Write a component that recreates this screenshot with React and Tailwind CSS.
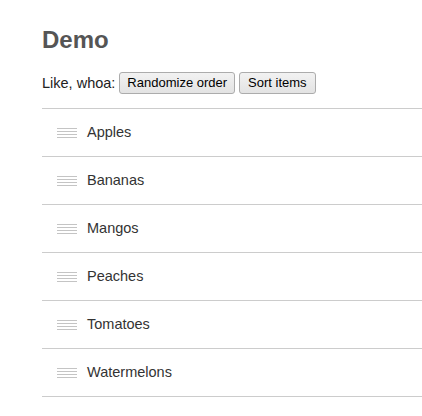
import React, { useState } from "react";

const initial = ["Apples", "Bananas", "Mangos", "Peaches", "Tomatoes", "Watermelons"];

function Handle() {
  return (
    <svg width="20" height="10" viewBox="0 0 20 10" className="shrink-0">
      <rect x="0" y="0" width="20" height="1" fill="#c4c4c4" />
      <rect x="0" y="3" width="20" height="1" fill="#c4c4c4" />
      <rect x="0" y="6" width="20" height="1" fill="#c4c4c4" />
      <rect x="0" y="9" width="20" height="1" fill="#c4c4c4" />
    </svg>
  );
}

export default function App() {
  const [items, setItems] = useState(initial);
  const randomize = () => {
    const a = [...items];
    for (let i = a.length - 1; i > 0; i--) {
      const j = Math.floor(Math.random() * (i + 1));
      [a[i], a[j]] = [a[j], a[i]];
    }
    setItems(a);
  };
  const sort = () => setItems([...items].sort());
  return (
    <div className="min-h-[416px] bg-white pl-[42px] pt-[26px] font-['Liberation_Sans',Arial,sans-serif] text-[#222]">
      <h1 className="text-[24px] font-bold leading-[28px] text-[#555]">Demo</h1>
      <div className="mt-[18px] flex items-center text-[14.5px] leading-[22px]">
        <span>Like, whoa:</span>
        <button
          onClick={randomize}
          className="ml-[4px] h-[22px] rounded-[3px] border border-[#acacac] bg-gradient-to-b from-[#f2f2f2] to-[#e3e3e3] px-[7px] text-[13px] leading-[20px] text-black"
        >
          Randomize order
        </button>
        <button
          onClick={sort}
          className="ml-[4px] h-[22px] rounded-[3px] border border-[#acacac] bg-gradient-to-b from-[#f2f2f2] to-[#e3e3e3] px-[8px] text-[13px] leading-[20px] text-black"
        >
          Sort items
        </button>
      </div>
      <ul className="mt-[14px] border-t border-[#cccccc]">
        {items.map((it) => (
          <li
            key={it}
            className="flex h-[48px] items-center gap-[10px] border-b border-[#cccccc] pl-[15px] text-[14.5px] text-[#333]"
          >
            <Handle />
            <span>{it}</span>
          </li>
        ))}
      </ul>
    </div>
  );
}
